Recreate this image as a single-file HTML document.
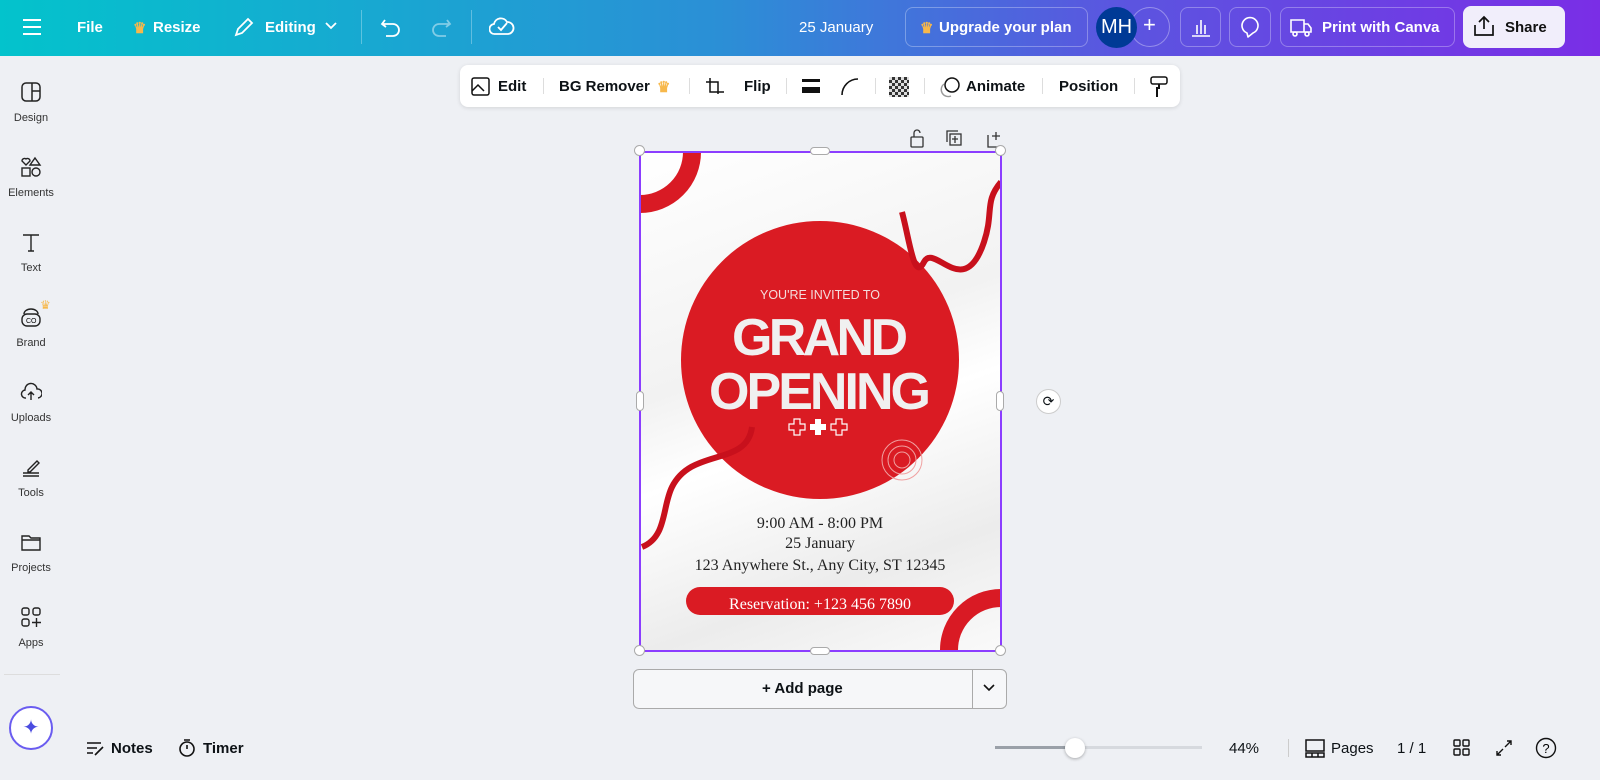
<!DOCTYPE html><html><head><meta charset="utf-8"><style>
*{margin:0;padding:0;box-sizing:border-box}
body{width:1600px;height:780px;overflow:hidden;background:#eef0f4;font-family:"Liberation Sans",sans-serif;position:relative;color:#0d1216}
.top{position:absolute;left:0;top:0;width:1600px;height:56px;background:linear-gradient(90deg,#03c3cc 0%,#2b8fd6 45%,#5b55e0 70%,#7a2ee6 100%);color:#fff;font-size:15px;font-weight:bold}
.top .t{position:absolute;top:19px}
.box{position:absolute;top:7px;height:40px;border:1px solid rgba(255,255,255,.3);border-radius:8px}
.side{position:absolute;left:0;top:56px;width:62px}
.side .it{position:absolute;left:0;width:62px;text-align:center;font-size:11px;color:#333}
.tb{position:absolute;left:460px;top:65px;width:720px;height:42px;background:#fff;border-radius:8px;box-shadow:0 1px 4px rgba(0,0,0,.12);font-size:15px;font-weight:bold}
.tb span{position:absolute;top:13px}
.sep{position:absolute;top:13px;width:1px;height:16px;background:#ddd}
.h{position:absolute;width:11px;height:11px;border-radius:50%;background:#fff;border:1px solid #aaa}
.bot{position:absolute;font-size:15px;font-weight:bold;top:740px}
</style></head><body>
<div class="top">
<svg style="position:absolute;left:22px;top:18px" width="20" height="18"><path d="M1 2h18M1 9h18M1 16h18" stroke="#fff" stroke-width="2"/></svg>
<span class="t" style="left:77px">File</span>
<span class="t" style="left:133px;color:#f7b84b">♛</span><span class="t" style="left:153px">Resize</span>
<svg style="position:absolute;left:233px;top:16px" width="22" height="22"><path d="M3 19l2-6L15 3l4 4L9 17z" stroke="#fff" stroke-width="1.8" fill="none"/></svg>
<span class="t" style="left:265px">Editing</span>
<svg style="position:absolute;left:324px;top:21px" width="14" height="10"><path d="M2 2l5 5 5-5" stroke="#fff" stroke-width="1.8" fill="none"/></svg>
<div style="position:absolute;left:361px;top:10px;width:1px;height:34px;background:rgba(255,255,255,.3)"></div>
<svg style="position:absolute;left:380px;top:16px" width="24" height="22"><path d="M5 4L2 8l4 3M2 8h11a6 6 0 010 12H6" stroke="#fff" stroke-width="1.8" fill="none"/></svg>
<svg style="position:absolute;left:428px;top:16px" width="24" height="22"><path d="M19 4l3 4-4 3M22 8H11a6 6 0 000 12h7" stroke="rgba(255,255,255,.45)" stroke-width="1.8" fill="none"/></svg>
<div style="position:absolute;left:471px;top:10px;width:1px;height:34px;background:rgba(255,255,255,.3)"></div>
<svg style="position:absolute;left:489px;top:14px" width="26" height="24"><path d="M6 20a5 5 0 01-1-10 7 7 0 0113-2 5 5 0 011 12z" stroke="#fff" stroke-width="1.8" fill="none"/><path d="M9 13l3 3 6-7" stroke="#fff" stroke-width="1.8" fill="none"/></svg>
<span class="t" style="left:799px;font-weight:normal">25 January</span>
<div class="box" style="left:905px;width:183px"></div>
<span class="t" style="left:920px;color:#f7b84b">♛</span><span class="t" style="left:939px">Upgrade your plan</span>
<div style="position:absolute;left:1130px;top:7px;width:40px;height:40px;border-radius:50%;border:1px solid rgba(255,255,255,.35)"></div>
<span class="t" style="left:1143px;font-size:22px;top:12px;font-weight:normal">+</span>
<div style="position:absolute;left:1096px;top:7px;width:41px;height:41px;border-radius:50%;background:#003a96;text-align:center;line-height:41px;font-size:20px;font-weight:normal">MH</div>
<div class="box" style="left:1180px;width:41px"></div>
<svg style="position:absolute;left:1190px;top:16px" width="22" height="22"><path d="M2 20h18M7 18V9M11 18V4M15 18V9" stroke="#fff" stroke-width="1.6"/></svg>
<div class="box" style="left:1229px;width:42px"></div>
<svg style="position:absolute;left:1239px;top:15px" width="22" height="24"><path d="M8 18A8 8 0 1114 18L9 22z" stroke="#fff" stroke-width="1.6" fill="none" stroke-linejoin="round"/></svg>
<div class="box" style="left:1280px;width:175px"></div>
<svg style="position:absolute;left:1289px;top:16px" width="24" height="22"><path d="M2 4h13v12H2zM15 8h4l3 4v4h-7" stroke="#fff" stroke-width="1.6" fill="none"/><circle cx="6" cy="18" r="2" stroke="#fff" stroke-width="1.6" fill="none"/><circle cx="18" cy="18" r="2" stroke="#fff" stroke-width="1.6" fill="none"/></svg>
<span class="t" style="left:1322px">Print with Canva</span>
<div style="position:absolute;left:1463px;top:6px;width:102px;height:42px;background:#f1eefb;border-radius:8px"></div>
<svg style="position:absolute;left:1473px;top:15px" width="22" height="22"><path d="M11 14V2M6 7l5-5 5 5M2 10v10h18V10" stroke="#111" stroke-width="1.7" fill="none"/></svg>
<span class="t" style="left:1505px;color:#111">Share</span>
</div>
<div class="side">
<div class="it" style="top:25px"><svg width="22" height="22"><rect x="2" y="2" width="18" height="18" rx="4" stroke="#222" stroke-width="1.5" fill="none"/><path d="M12 2v18M12 10h8" stroke="#222" stroke-width="1.5"/></svg><br><span style="position:relative;top:6px">Design</span></div>
<div class="it" style="top:100px"><svg width="22" height="22"><path d="M6 9L2 5a2.5 2.5 0 014-2 2.5 2.5 0 014 2z M15 2l5 7h-10z" stroke="#222" stroke-width="1.4" fill="none"/><rect x="2" y="12" width="8" height="8" stroke="#222" stroke-width="1.4" fill="none"/><circle cx="16" cy="16" r="4" stroke="#222" stroke-width="1.4" fill="none"/></svg><br><span style="position:relative;top:6px">Elements</span></div>
<div class="it" style="top:175px"><svg width="22" height="22"><path d="M3 4h16M11 4v16M8 20h6" stroke="#222" stroke-width="1.4" fill="none"/></svg><br><span style="position:relative;top:6px">Text</span></div>
<div class="it" style="top:250px"><svg width="22" height="22"><rect x="2" y="8" width="18" height="12" rx="5" stroke="#222" stroke-width="1.4" fill="none"/><path d="M4 8a7 5 0 0114 0" stroke="#222" stroke-width="1.4" fill="none"/><text x="6" y="17" font-size="7" font-family="Liberation Sans">CO</text></svg><br><span style="position:relative;top:6px">Brand</span></div>
<span style="position:absolute;left:40px;top:242px;color:#f7b84b;font-size:12px">♛</span>
<div class="it" style="top:325px"><svg width="22" height="22"><path d="M6 17a4 4 0 01-1-8 6 6 0 0112-1 4 4 0 011 9M11 19v-7M8 14l3-3 3 3" stroke="#222" stroke-width="1.4" fill="none"/></svg><br><span style="position:relative;top:6px">Uploads</span></div>
<div class="it" style="top:400px"><svg width="22" height="22"><path d="M8 14l9-9 2 2-9 9h-2zM3 17h16M3 20h16" stroke="#222" stroke-width="1.4" fill="none"/></svg><br><span style="position:relative;top:6px">Tools</span></div>
<div class="it" style="top:475px"><svg width="22" height="22"><path d="M2 5h7l2 2h9v12H2z M2 9h18" stroke="#222" stroke-width="1.4" fill="none"/></svg><br><span style="position:relative;top:6px">Projects</span></div>
<div class="it" style="top:550px"><svg width="22" height="22"><rect x="2" y="2" width="7" height="7" rx="2" stroke="#222" stroke-width="1.4" fill="none"/><rect x="13" y="2" width="7" height="7" rx="2" stroke="#222" stroke-width="1.4" fill="none"/><rect x="2" y="13" width="7" height="7" rx="2" stroke="#222" stroke-width="1.4" fill="none"/><path d="M16.5 12v9M12 16.5h9" stroke="#222" stroke-width="1.4"/></svg><br><span style="position:relative;top:6px">Apps</span></div>
<div style="position:absolute;left:4px;top:618px;width:56px;height:1px;background:#ddd"></div>
<div style="position:absolute;left:9px;top:650px;width:44px;height:44px;border-radius:50%;border:2px solid #6a5cf0;background:#fff;text-align:center;line-height:40px;color:#4b4ce0;font-size:20px">✦</div>
</div>
<div class="tb">
<svg style="position:absolute;left:10px;top:11px" width="22" height="22"><rect x="2" y="2" width="17" height="17" rx="2" stroke="#111" stroke-width="1.5" fill="none"/><path d="M2 15l6-6 6 6" stroke="#111" stroke-width="1.5" fill="none"/></svg>
<span style="left:38px">Edit</span><div class="sep" style="left:83px"></div>
<span style="left:99px">BG Remover</span><span style="left:197px;color:#f7b84b">♛</span><div class="sep" style="left:229px"></div>
<svg style="position:absolute;left:244px;top:11px" width="22" height="22"><path d="M6 2v14h14M2 6h12v12" stroke="#111" stroke-width="1.5" fill="none"/></svg>
<span style="left:284px">Flip</span><div class="sep" style="left:326px"></div>
<div style="position:absolute;left:342px;top:14px;width:18px;height:3px;background:#111"></div><div style="position:absolute;left:342px;top:22px;width:18px;height:6px;background:#111"></div>
<svg style="position:absolute;left:380px;top:12px" width="20" height="20"><path d="M2 18A16 16 0 0118 2" stroke="#111" stroke-width="1.6" fill="none"/></svg>
<div class="sep" style="left:415px"></div>
<div style="position:absolute;left:429px;top:12px;width:20px;height:20px;background:repeating-conic-gradient(#333 0 25%,#ddd 0 50%) 0 0/6px 6px"></div>
<div class="sep" style="left:464px"></div>
<svg style="position:absolute;left:479px;top:11px" width="24" height="22"><circle cx="13" cy="9" r="7" stroke="#111" stroke-width="1.5" fill="none"/><path d="M5 8a7 7 0 007 12" stroke="#999" stroke-width="1.4" fill="none"/></svg>
<span style="left:506px">Animate</span><div class="sep" style="left:582px"></div>
<span style="left:599px">Position</span><div class="sep" style="left:674px"></div>
<svg style="position:absolute;left:688px;top:10px" width="22" height="24"><rect x="3" y="2" width="16" height="7" rx="2" stroke="#111" stroke-width="1.5" fill="none"/><path d="M11 9v4h-2v9" stroke="#111" stroke-width="2" fill="none"/></svg>
</div>
<svg style="position:absolute;left:908px;top:127px" width="100" height="24"><rect x="3" y="10" width="12" height="10" rx="1" stroke="#333" fill="none" stroke-width="1.3"/><path d="M6 10V6a3 3 0 016 0" stroke="#333" fill="none" stroke-width="1.3"/><rect x="42" y="7" width="11" height="11" stroke="#333" fill="none" stroke-width="1.3"/><path d="M39 15V4h11M47 9v7M44 12h6" stroke="#333" fill="none" stroke-width="1.3"/><path d="M88 5v8M84 9h8M80 8v12h12" stroke="#333" fill="none" stroke-width="1.3"/></svg>
<div style="position:absolute;left:640px;top:152px;width:361px;height:498px;background:linear-gradient(160deg,#fff 0%,#f2f2f2 40%,#fff 55%,#ececec 80%,#fafafa 100%);overflow:hidden">
<svg width="361" height="498" style="position:absolute;left:0;top:0">
<circle cx="0" cy="0" r="52" stroke="#d91a24" stroke-width="18" fill="none"/>
<circle cx="361" cy="498" r="52" stroke="#d91a24" stroke-width="18" fill="none"/>
<circle cx="180" cy="208" r="139" fill="#da1b23"/>
<path d="M262 60c8 30 12 70 22 50 10-20 40 40 60-20 10-30 0-40 17-60" stroke="#c8101c" stroke-width="6" fill="none"/>
<path d="M112 275c-5 40-60 20-80 60-10 20-5 50-30 60" stroke="#c8101c" stroke-width="6" fill="none"/>
<circle cx="262" cy="308" r="20" stroke="#f0a0a0" fill="none"/><circle cx="262" cy="308" r="14" stroke="#f0a0a0" fill="none"/><circle cx="262" cy="308" r="8" stroke="#f0a0a0" fill="none"/>
<text x="180" y="147" text-anchor="middle" fill="#f4dcdc" font-size="12.5" font-family="Liberation Sans">YOU'RE INVITED TO</text>
<text x="180" y="203" text-anchor="middle" fill="#f0f0f0" font-size="52" font-weight="bold" font-family="Liberation Sans" textLength="176">GRAND</text>
<text x="180" y="257" text-anchor="middle" fill="#f0f0f0" font-size="52" font-weight="bold" font-family="Liberation Sans" textLength="222">OPENING</text>
<path d="M154 267h6v5h5v6h-5v5h-6v-5h-5v-6h5z M196 267h6v5h5v6h-5v5h-6v-5h-5v-6h5z" stroke="#fff" fill="none" stroke-width="1.2"/>
<path d="M175 267h6v5h5v6h-5v5h-6v-5h-5v-6h5z" fill="#fff"/>
<text x="180" y="376" text-anchor="middle" fill="#222" font-size="16" font-family="Liberation Serif">9:00 AM - 8:00 PM</text>
<text x="180" y="396" text-anchor="middle" fill="#222" font-size="16" font-family="Liberation Serif">25 January</text>
<text x="180" y="418" text-anchor="middle" fill="#222" font-size="16" font-family="Liberation Serif">123 Anywhere St., Any City, ST 12345</text>
<rect x="46" y="435" width="268" height="28" rx="14" fill="#da1b23"/>
<text x="180" y="457" text-anchor="middle" fill="#fff" font-size="16" font-family="Liberation Serif">Reservation: +123 456 7890</text>
</svg></div>
<div style="position:absolute;left:639px;top:151px;width:363px;height:501px;border:2px solid #8b3dff"></div>
<div class="h" style="left:634px;top:145px"></div><div class="h" style="left:995px;top:145px"></div><div class="h" style="left:634px;top:645px"></div><div class="h" style="left:995px;top:645px"></div>
<div style="position:absolute;left:810px;top:147px;width:20px;height:8px;border-radius:4px;background:#fff;border:1px solid #aaa"></div>
<div style="position:absolute;left:810px;top:647px;width:20px;height:8px;border-radius:4px;background:#fff;border:1px solid #aaa"></div>
<div style="position:absolute;left:636px;top:391px;width:8px;height:20px;border-radius:4px;background:#fff;border:1px solid #aaa"></div>
<div style="position:absolute;left:996px;top:391px;width:8px;height:20px;border-radius:4px;background:#fff;border:1px solid #aaa"></div>
<div style="position:absolute;left:1036px;top:389px;width:25px;height:25px;border-radius:50%;background:#fff;border:1px solid #ccc;text-align:center;line-height:23px;font-size:14px">⟳</div>
<div style="position:absolute;left:633px;top:669px;width:374px;height:40px;border:1px solid #aaa;border-radius:6px;background:#f6f7f9"></div>
<div style="position:absolute;left:972px;top:669px;width:1px;height:40px;background:#aaa"></div>
<span style="position:absolute;left:762px;top:680px;font-size:15px;font-weight:bold">+ Add page</span>
<svg style="position:absolute;left:983px;top:684px" width="12" height="8"><path d="M1 1l5 5 5-5" stroke="#111" stroke-width="1.6" fill="none"/></svg>
<svg style="position:absolute;left:85px;top:739px" width="20" height="18"><path d="M2 4h14M2 9h10M2 14h6M10 16l8-8" stroke="#111" stroke-width="1.6"/></svg>
<span class="bot" style="left:111px">Notes</span>
<svg style="position:absolute;left:177px;top:738px" width="20" height="20"><circle cx="10" cy="11" r="7" stroke="#111" stroke-width="1.6" fill="none"/><path d="M10 11V7M7 2h6" stroke="#111" stroke-width="1.6"/></svg>
<span class="bot" style="left:203px">Timer</span>
<div style="position:absolute;left:995px;top:746px;width:207px;height:3px;background:#d6d9de"></div>
<div style="position:absolute;left:995px;top:746px;width:80px;height:3px;background:#9aa0a8"></div>
<div style="position:absolute;left:1065px;top:738px;width:20px;height:20px;border-radius:50%;background:#fff;box-shadow:0 1px 3px rgba(0,0,0,.3)"></div>
<span class="bot" style="left:1229px;font-weight:normal">44%</span>
<div style="position:absolute;left:1288px;top:739px;width:1px;height:18px;background:#ccc"></div>
<svg style="position:absolute;left:1304px;top:738px" width="22" height="20"><rect x="2" y="2" width="18" height="11" stroke="#111" stroke-width="1.5" fill="none"/><path d="M2 15h18v4H2zM8 15v4M14 15v4" stroke="#111" stroke-width="1.5" fill="none"/></svg>
<span class="bot" style="left:1331px;font-weight:normal">Pages</span>
<span class="bot" style="left:1397px;font-weight:normal">1 / 1</span>
<svg style="position:absolute;left:1453px;top:739px" width="18" height="18"><rect x="1" y="1" width="6" height="6" rx="1" stroke="#111" stroke-width="1.4" fill="none"/><rect x="10" y="1" width="6" height="6" rx="1" stroke="#111" stroke-width="1.4" fill="none"/><rect x="1" y="10" width="6" height="6" rx="1" stroke="#111" stroke-width="1.4" fill="none"/><rect x="10" y="10" width="6" height="6" rx="1" stroke="#111" stroke-width="1.4" fill="none"/></svg>
<svg style="position:absolute;left:1495px;top:739px" width="18" height="18"><path d="M10 8l6-6M12 2h4v4M8 10l-6 6M2 12v4h4" stroke="#111" stroke-width="1.4" fill="none"/></svg>
<svg style="position:absolute;left:1535px;top:737px" width="22" height="22"><circle cx="11" cy="11" r="9.5" stroke="#111" stroke-width="1.4" fill="none"/><text x="11" y="16" text-anchor="middle" font-size="13" font-family="Liberation Sans">?</text></svg>
</body></html>
